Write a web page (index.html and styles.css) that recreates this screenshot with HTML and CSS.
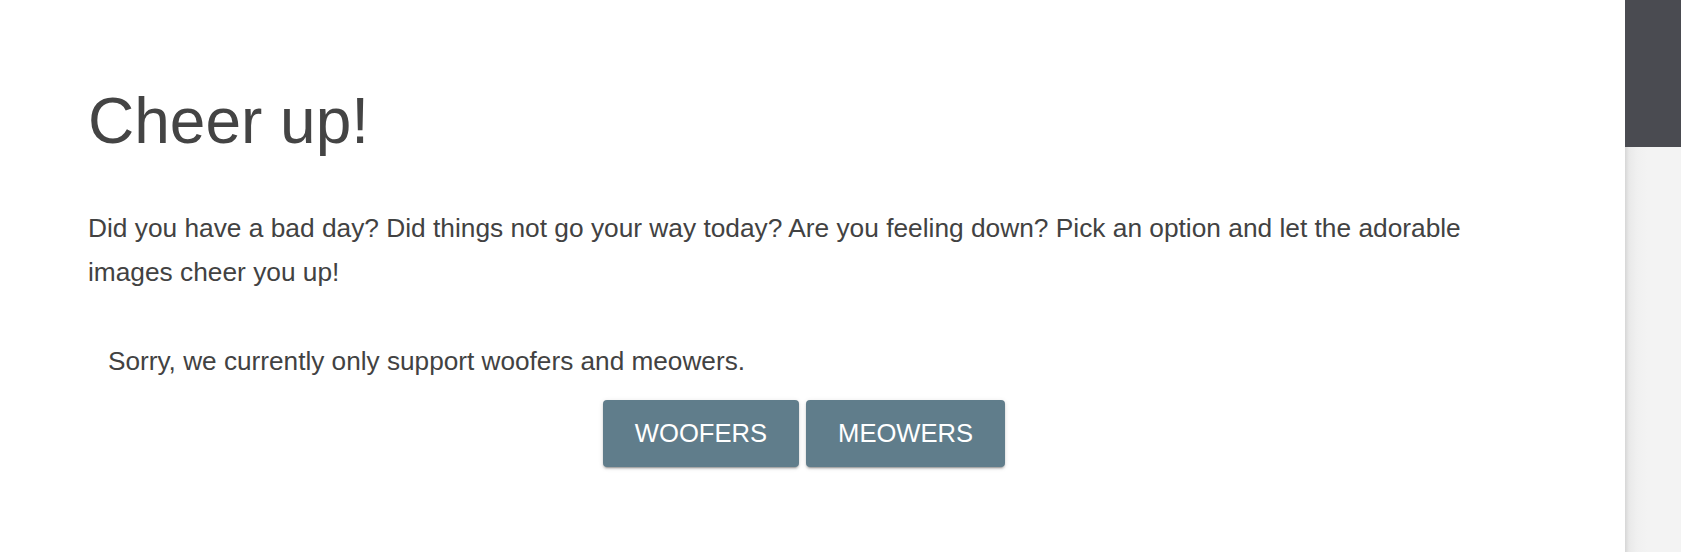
FILE: index.html
```html
<!DOCTYPE html>
<html lang="en">
<head>
<meta charset="utf-8">
<title>Cheer up!</title>
<link rel="stylesheet" href="styles.css">
</head>
<body>
  <div class="page">
    <main class="content">
      <h1 class="title">Cheer up!</h1>
      <p class="intro">Did you have a bad day? Did things not go your way today? Are you feeling down? Pick an option and let the adorable images cheer you up!</p>
      <p class="notice">Sorry, we currently only support woofers and meowers.</p>
      <div class="actions">
        <button class="btn" type="button">WOOFERS</button>
        <button class="btn" type="button">MEOWERS</button>
      </div>
    </main>
    <div class="scrollbar">
      <div class="scrollbar-thumb"></div>
    </div>
  </div>
</body>
</html>
```
FILE: styles.css
```css
html, body {
  margin: 0;
  padding: 0;
  height: 100%;
  background: #ffffff;
}

body {
  font-family: "Liberation Sans", Arial, sans-serif;
  color: #424242;
  overflow: hidden;
}

.page {
  display: flex;
  height: 552px;
}

.content {
  flex: 1;
  padding: 0 105px 0 88px;
}

.title {
  margin: 83px 0 0;
  font-size: 64px;
  line-height: 77px;
  font-weight: 400;
  color: #444444;
}

.intro {
  margin: 47px 0 0;
  font-size: 26.3px;
  line-height: 43.5px;
}

.notice {
  margin: 46px 0 0;
  padding-left: 20px;
  font-size: 26.2px;
  line-height: 43.5px;
}

.actions {
  display: flex;
  justify-content: center;
  gap: 7px;
  margin-top: 16px;
}

.btn {
  font-family: "Liberation Sans", Arial, sans-serif;
  font-size: 25.6px;
  color: #ffffff;
  background: #607d8b;
  border: none;
  border-radius: 4px;
  height: 67px;
  padding: 0 32px;
  box-shadow: 0 3px 1px -2px rgba(0,0,0,0.2), 0 2px 2px 0 rgba(0,0,0,0.14), 0 1px 5px 0 rgba(0,0,0,0.12);
  cursor: pointer;
}

.scrollbar {
  width: 56px;
  flex: none;
  background: linear-gradient(to right, #d6d6d6 0px, #e9e9e9 4px, #f0f0f0 12px, #f3f3f3 22px);
}

.scrollbar-thumb {
  height: 147px;
  background: #4a4b51;
}
```
